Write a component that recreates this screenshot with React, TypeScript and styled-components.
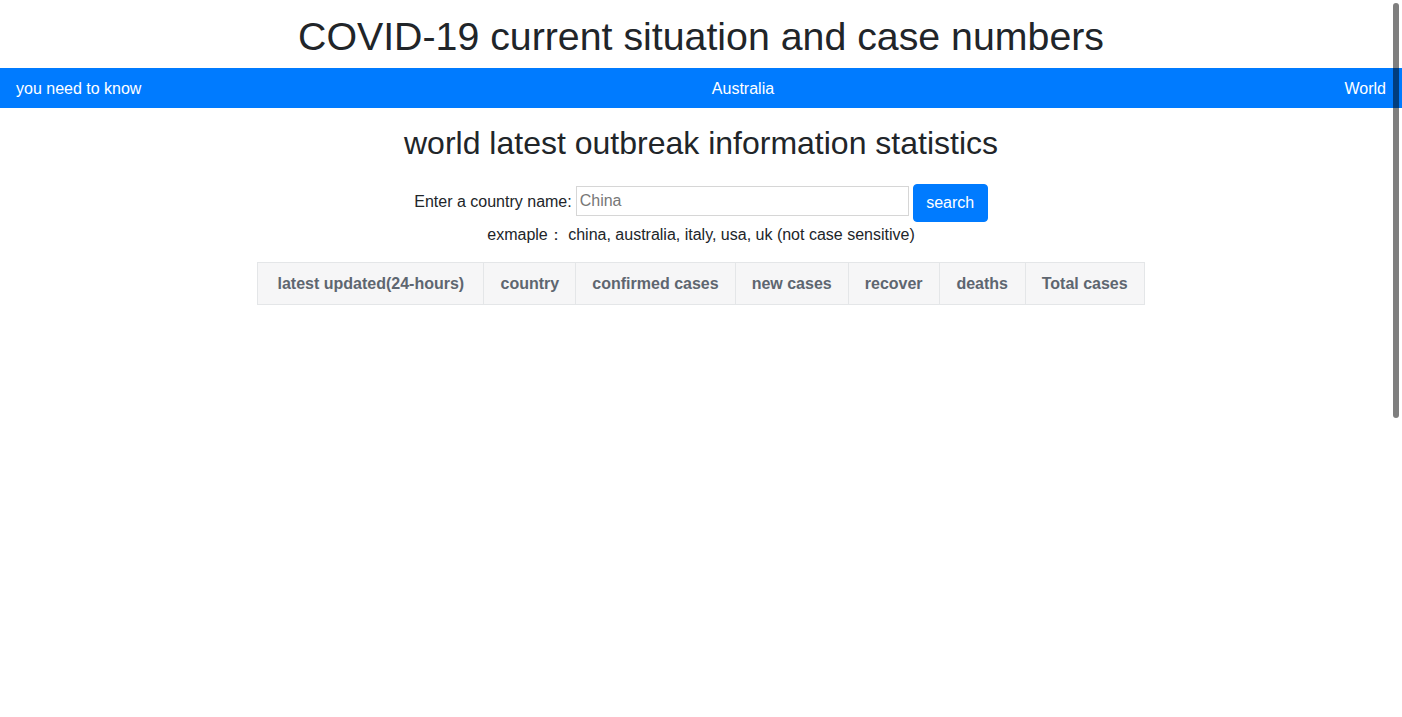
import React from 'react'
import styled, { createGlobalStyle } from 'styled-components'

const GlobalStyle = createGlobalStyle`
  html, body {
    margin: 0;
    padding: 0;
    background: #fff;
  }
  body {
    font-family: 'Liberation Sans', Arial, Helvetica, sans-serif;
    color: #212529;
    font-size: 16px;
    line-height: 1.5;
  }
  * { box-sizing: border-box; }
`

const columns = [
    { title: 'latest updated(24-hours)', width: 226 },
    { title: 'country', width: 92 },
    { title: 'confirmed cases', width: 159 },
    { title: 'new cases', width: 113 },
    { title: 'recover', width: 91 },
    { title: 'deaths', width: 86 },
    { title: 'Total cases', width: 117 },
]

const App = () => {
    return (
        <>
            <GlobalStyle />
            <StyledPage>
                <StyledTitle>COVID-19 current situation and case numbers</StyledTitle>
                <StyledNav>
                    <NavLink href="#">you need to know</NavLink>
                    <NavLink href="#">Australia</NavLink>
                    <NavLink href="#">World</NavLink>
                </StyledNav>
                <StyledMain>
                    <StyledHeading>world latest outbreak information statistics</StyledHeading>
                    <SearchRow>
                        <SearchLabel htmlFor="country">Enter a country name:</SearchLabel>
                        <SearchInput id="country" type="text" placeholder="China" />
                        <SearchButton type="button">search</SearchButton>
                    </SearchRow>
                    <Hint>exmaple： china, australia, italy, usa, uk (not case sensitive)</Hint>
                    <StatsTable>
                        <thead>
                            <tr>
                                {columns.map((c) => (
                                    <HeadCell key={c.title} style={{ width: c.width }}>
                                        {c.title}
                                    </HeadCell>
                                ))}
                            </tr>
                        </thead>
                    </StatsTable>
                </StyledMain>
            </StyledPage>
            <FakeScrollbar />
        </>
    )
}

const StyledPage = styled.div`
  min-height: 1230px;
`

const StyledTitle = styled.h1`
  margin: 12px 0 8px;
  font-size: 39.3px;
  font-weight: 500;
  line-height: 48px;
  text-align: center;
`

const StyledNav = styled.nav`
  display: flex;
  justify-content: space-between;
  align-items: center;
  height: 40px;
  padding: 1px 16px 0;
  background-color: #007bff;
`

const NavLink = styled.a`
  color: #fff;
  text-decoration: none;
  font-size: 16px;
  line-height: 24px;
`

const StyledMain = styled.main`
  display: flex;
  flex-direction: column;
  align-items: center;
`

const StyledHeading = styled.h2`
  margin: 16px 0 0;
  font-size: 32px;
  font-weight: 500;
  line-height: 38px;
`

const SearchRow = styled.div`
  display: flex;
  align-items: center;
  margin-top: 22px;
  height: 38px;
`

const SearchLabel = styled.label`
  margin-right: 4px;
  margin-bottom: 2px;
`

const SearchInput = styled.input`
  width: 333px;
  height: 30px;
  margin-bottom: 4px;
  padding: 1px 3px;
  border: 1px solid #d6d6d6;
  font-family: inherit;
  font-size: 16px;
  color: #212529;
  outline: none;
  &::placeholder {
    color: #777;
  }
`

const SearchButton = styled.button`
  margin-left: 4px;
  width: 75px;
  height: 38px;
  border: 1px solid #007bff;
  border-radius: 4px;
  background-color: #007bff;
  color: #fff;
  font-family: inherit;
  font-size: 16px;
  line-height: 24px;
  padding: 6px 12px;
  cursor: pointer;
`

const Hint = styled.div`
  margin-top: 1px;
  line-height: 24px;
`

const StatsTable = styled.table`
  margin-top: 15px;
  border-collapse: collapse;
  table-layout: fixed;
`

const HeadCell = styled.th`
  height: 42px;
  padding: 0 16px;
  border: 1px solid #e4e6e8;
  background-color: #f6f6f7;
  color: #5e6670;
  font-size: 16px;
  font-weight: bold;
  text-align: center;
  white-space: nowrap;
`

const FakeScrollbar = styled.div`
  position: fixed;
  top: 3px;
  right: 3px;
  width: 6px;
  height: 415px;
  border-radius: 3px;
  background-color: rgba(0, 0, 0, 0.5);
`

export default App
